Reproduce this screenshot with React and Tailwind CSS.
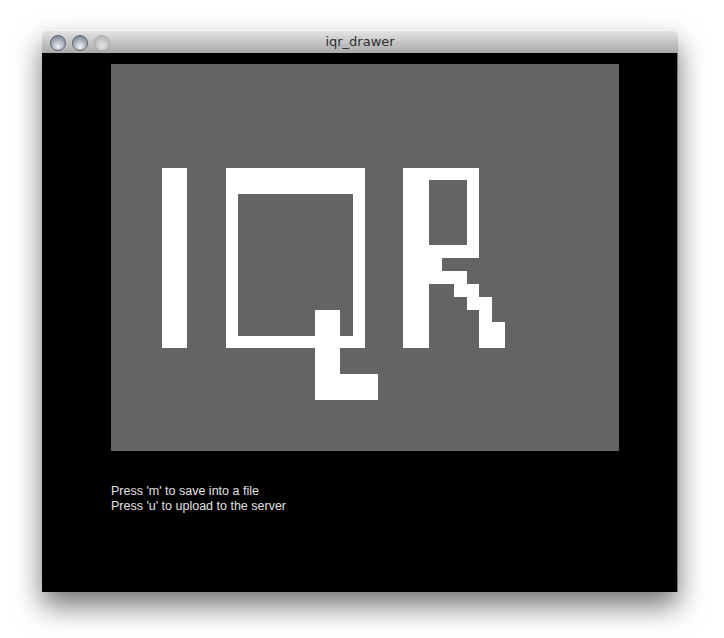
import React from "react";

// grey canvas drawing: pixel letters I Q R
const IqrLetters = () => (
  <svg width="508" height="387" viewBox="0 0 508 387" shapeRendering="crispEdges">
    <g fill="#ffffff">
      {/* I */}
      <rect x="51" y="104" width="25" height="180" />
      {/* Q box */}
      <rect x="115" y="104" width="139" height="26" />
      <rect x="115" y="104" width="12" height="180" />
      <rect x="242" y="104" width="12" height="180" />
      <rect x="115" y="272" width="139" height="12" />
      {/* Q tail */}
      <rect x="204" y="246" width="25" height="90" />
      <rect x="204" y="310" width="63" height="26" />
      {/* R */}
      <rect x="292" y="104" width="26" height="180" />
      <rect x="292" y="104" width="76" height="12" />
      <rect x="356" y="104" width="12" height="90" />
      <rect x="318" y="181" width="50" height="13" />
      <rect x="318" y="194" width="13" height="13" />
      <rect x="318" y="207" width="38" height="13" />
      <rect x="343" y="220" width="25" height="13" />
      <rect x="356" y="233" width="25" height="13" />
      <rect x="368" y="245" width="13" height="14" />
      <rect x="368" y="258" width="26" height="26" />
    </g>
  </svg>
);

const Light = ({ dim }) => (
  <div
    className={
      dim
        ? "w-[16px] h-[16px] rounded-full border border-[#a9a9a9] bg-[radial-gradient(circle_at_50%_70%,#e2e2e2,#bdbdbd_70%)]"
        : "w-[16px] h-[16px] rounded-full border border-[#5d6270] bg-[radial-gradient(circle_at_50%_75%,#eef1f6,#a2a8b4_55%,#6f7582)]"
    }
  />
);

export default function App() {
  return (
    <div className="w-[724px] h-[638px] bg-white pt-[30px] pl-[42px]">
      <div className="w-[636px] rounded-t-[5px] shadow-[0_14px_28px_rgba(0,0,0,0.55)]">
        <div className="relative h-[23px] rounded-t-[5px] border-t border-[#f2f2f2] bg-gradient-to-b from-[#e4e4e4] to-[#a9a9a9] flex items-center">
          <div className="flex gap-[6px] pl-[8px] pt-[1px]">
            <Light />
            <Light />
            <Light dim />
          </div>
          <div className="absolute inset-0 flex items-center justify-center text-[13px] text-[#2e2e2e] font-['Lucida_Grande','DejaVu_Sans',sans-serif]">
            iqr_drawer
          </div>
        </div>
        <div className="h-[539px] bg-black pt-[11px] pl-[69px] border-r border-[#777]">
          <div className="w-[508px] h-[387px] bg-[#646464]">
            <IqrLetters />
          </div>
          <div className="mt-[33px] text-[12.5px] leading-[15px] text-[#e2e2e2] font-['Liberation_Sans',Arial,sans-serif]">
            <div>Press 'm' to save into a file</div>
            <div>Press 'u' to upload to the server</div>
          </div>
        </div>
      </div>
    </div>
  );
}
